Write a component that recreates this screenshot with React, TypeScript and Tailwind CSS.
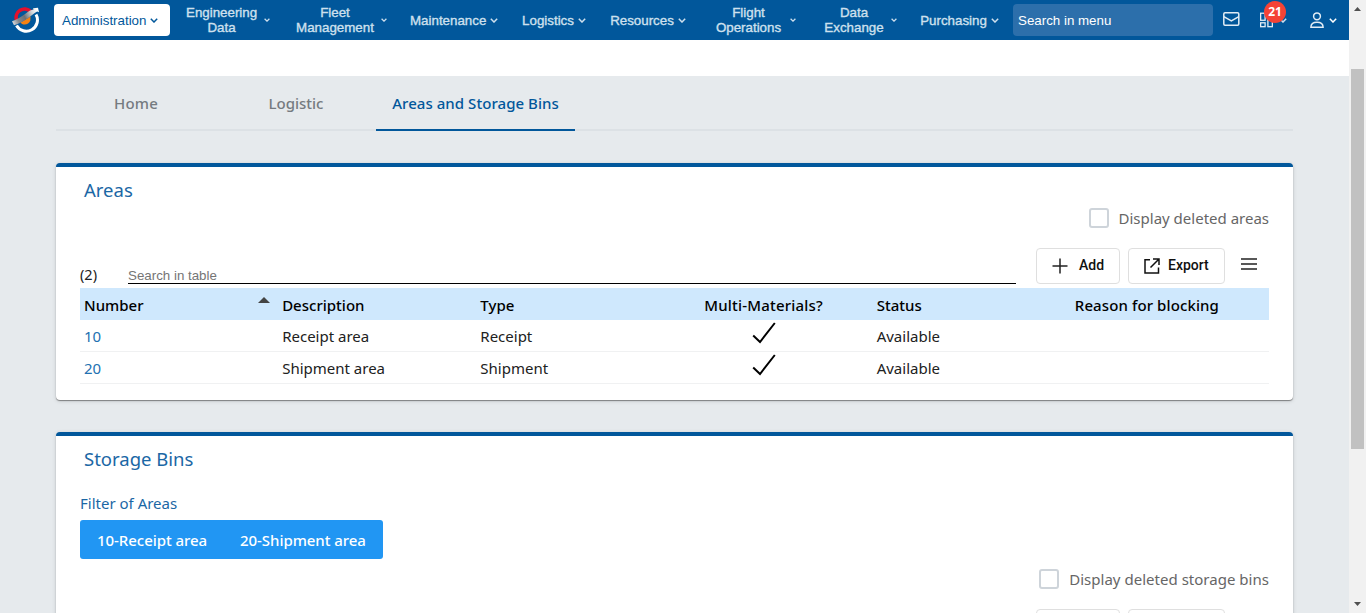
import React from 'react';

const navItems = [
  { label: ['Engineering', 'Data'], box: 'w-[109px]', text: 'w-[71px]', chev: 'small', gap: 'pl-[7px]' },
  { label: ['Fleet', 'Management'], box: 'w-[115px]', text: 'w-[80px]', chev: 'small', gap: 'pl-[6px]' },
  { label: ['Maintenance'], box: 'w-[112px]', text: 'w-[76px]', chev: 'big', gap: 'pl-[4px]' },
  { label: ['Logistics'], box: 'w-[88px]', text: 'w-[52px]', chev: 'big', gap: 'pl-[4px]' },
  { label: ['Resources'], box: 'w-[105px]', text: 'w-[64px]', chev: 'big', gap: 'pl-[4px]' },
  { label: ['Flight', 'Operations'], box: 'w-[109px]', text: 'w-[67px]', chev: 'small', gap: 'pl-[8px]' },
  { label: ['Data', 'Exchange'], box: 'w-[96px]', text: 'w-[60px]', chev: 'small', gap: 'pl-[7px]' },
  { label: ['Purchasing'], box: 'w-[93px]', text: 'w-[67px]', chev: 'big', gap: 'pl-[4px]' },
];

function Chevron({ small = false }: { small?: boolean }) {
  return (
    <svg
      className={small ? 'h-[4px] w-[6px] shrink-0' : 'h-[5px] w-[8px] shrink-0'}
      viewBox="0 0 8 5"
      fill="none"
      stroke="currentColor"
      strokeWidth={small ? 1.7 : 1.5}
    >
      <path d="M0.8 0.8 4 4 7.2 0.8" />
    </svg>
  );
}

function Logo() {
  return (
    <svg className="ml-[12px] h-[26px] w-[28px] shrink-0" viewBox="0 0 28 26" fill="none">
      <defs>
        <linearGradient id="wing" x1="0" y1="17" x2="26" y2="4" gradientUnits="userSpaceOnUse">
          <stop offset="0" stopColor="#e4e6e8" />
          <stop offset="0.25" stopColor="#85888c" />
          <stop offset="0.5" stopColor="#6c6f73" />
          <stop offset="0.8" stopColor="#d5d8db" />
          <stop offset="1" stopColor="#ffffff" />
        </linearGradient>
      </defs>
      <path d="M4.500 13A8.500 8.500 0 0 1 18.500 4.400" stroke="#e4102d" strokeWidth="3.600" />
      <path d="M24 7.500A11 11 0 0 1 4.500 18.500" stroke="#fff" strokeWidth="3" />
      <path d="M8.500 15.500C10 18.500 17 18.500 18.300 13.500L18.500 9.500Z" fill="#f58212" />
      <path d="M0 14.200C7 12 13 7 18 3.500L21.500 2.600 21 1.200 26 0.800 27 5.200 25.200 4.500C20 7.500 12 15.500 2 18.200Z" fill="url(#wing)" />
    </svg>
  );
}

function NavBar() {
  return (
    <header className="flex h-[40px] shrink-0 items-center bg-[#01579b] font-['Liberation_Sans',Arial,sans-serif] text-[13.33px] text-[#cfe0ee]">
      <Logo />
      <button className="ml-[14px] flex h-[32px] w-[116px] shrink-0 items-center gap-[4px] rounded-[4px] bg-white pl-[8px] text-[#01579b]">
        <span className="w-[84px] translate-y-px whitespace-nowrap text-left">Administration</span>
        <Chevron />
      </button>
      <nav className="ml-[16px] flex shrink-0 items-center">
        {navItems.map((item) => (
          <div key={item.label.join(' ')} className={`${item.box} flex shrink-0 items-center`}>
            <span className={`${item.text} shrink-0 text-center leading-[15px] [-webkit-text-stroke:0.35px_currentColor]`}>
              {item.label.map((line) => (
                <span key={line} className="block whitespace-nowrap">{line}</span>
              ))}
            </span>
            <span className={item.gap}>
              <Chevron small={item.chev === 'small'} />
            </span>
          </div>
        ))}
      </nav>
      <div className="flex h-[32px] w-[200px] shrink-0 items-center rounded-[4px] bg-[#2c6fab] pl-[5px] pt-[2px] text-white">
        Search in menu
      </div>
      <svg className="ml-[10px] h-[14px] w-[17px] shrink-0 -translate-y-px" viewBox="0 0 17 14" fill="none" stroke="#e1ecf5" strokeWidth="1.500">
        <rect x="0.800" y="0.800" width="15" height="12.400" rx="1.200" />
        <path d="M0.800 4.600 8.350 8.800 15.800 4.600" />
      </svg>
      <div className="relative ml-[20px] flex h-[40px] w-[27px] shrink-0 items-center">
        <svg className="h-[16px] w-[14px]" viewBox="0 0 14 16" fill="none" stroke="#e1ecf5" strokeWidth="1.400">
          <rect x="0.700" y="0.700" width="4.800" height="7.600" />
          <rect x="8.500" y="0.700" width="4.800" height="4.300" />
          <rect x="0.700" y="11" width="4.800" height="4.200" />
          <rect x="8.500" y="7.700" width="4.800" height="7.500" />
        </svg>
        <span className="ml-[6px]"><Chevron /></span>
        <span className="absolute left-[4px] top-[1px] flex h-[22px] w-[22px] items-center justify-center rounded-full bg-[#f44336] font-['Open_Sans','Noto_Sans',sans-serif] text-[12px] font-bold text-white">
          21
        </span>
      </div>
      <svg className="ml-[23px] h-[16px] w-[14px] shrink-0" viewBox="0 0 14 16" fill="none" stroke="#e1ecf5" strokeWidth="1.500">
        <circle cx="7" cy="4.300" r="3.400" />
        <path d="M0.900 15.200C0.900 11.500 2.800 10.200 7 10.200S13.100 11.500 13.100 15.200Z" />
      </svg>
      <span className="ml-[5px] text-white"><Chevron /></span>
    </header>
  );
}

function Tabs() {
  return (
    <div className="flex h-[55px] border-b-2 border-[#dce1e5] font-medium text-[#757b80]">
      <div className="flex h-[53px] w-[160px] items-center justify-center tracking-[0.2px]">Home</div>
      <div className="flex h-[53px] w-[160px] items-center justify-center">Logistic</div>
      <div className="flex h-[55px] w-[199px] items-center justify-center border-b-2 border-[#01579b] tracking-[0.05px] text-[#01579b]">
        <span className="whitespace-nowrap">Areas and Storage Bins</span>
      </div>
    </div>
  );
}

function DeletedToggle({ label }: { label: string }) {
  return (
    <label className="flex h-[20px] items-center justify-end gap-[10px] text-[#666]">
      <span className="h-[20px] w-[20px] rounded-[3px] border-2 border-[#ced4da] bg-white" />
      <span>{label}</span>
    </label>
  );
}

function Toolbar() {
  return (
    <div className="flex shrink-0 font-[Roboto,sans-serif] text-[14px] font-medium text-[#111]">
      <button className="flex h-[36px] w-[84px] items-center rounded-[4px] border border-[#dfdfdf] bg-white pl-[15px]">
        <svg className="h-[16px] w-[16px]" viewBox="0 0 16 16" stroke="#222" strokeWidth="1.500">
          <path d="M8 0.500V15.500M0.500 8H15.500" />
        </svg>
        <span className="ml-[11px] -translate-y-px">Add</span>
      </button>
      <button className="ml-[8px] flex h-[36px] w-[97px] items-center rounded-[4px] border border-[#dfdfdf] bg-white pl-[15px]">
        <svg className="h-[16px] w-[16px]" viewBox="0 0 16 16" fill="none" stroke="#111" strokeWidth="1.500">
          <path d="M6 1.700H1V15H14.500V9.500M9 1H15V7M15 1 6.500 9.500" />
        </svg>
        <span className="ml-[8px] -translate-y-px">Export</span>
      </button>
      <svg className="ml-[16px] mt-[10px] h-[12px] w-[16px]" viewBox="0 0 16 12" stroke="#222" strokeWidth="1.500">
        <path d="M0 1H16M0 6H16M0 11H16" />
      </svg>
      <span className="w-[12px]" />
    </div>
  );
}

function Check() {
  return (
    <svg className="h-[22px] w-[24px] -translate-y-[3px]" viewBox="0 0 24 22" fill="none" stroke="#000" strokeWidth="2">
      <path d="M1.200 13.500 8 20 22.800 1" />
    </svg>
  );
}

const rows = [
  { id: '10', description: 'Receipt area', type: 'Receipt' },
  { id: '20', description: 'Shipment area', type: 'Shipment' },
];

function AreasTable() {
  return (
    <div className="text-[#212121]">
      <div className="grid h-[32px] grid-cols-6 items-center bg-[#cfe8fd] pt-[2px] font-medium text-black">
        <div className="flex items-center justify-between pl-[4px] pr-[8px]">
          Number
          <svg className="h-[6px] w-[12px] -translate-y-[5px]" viewBox="0 0 12 6">
            <path d="M0 6 6 0 12 6Z" fill="#444" />
          </svg>
        </div>
        <div className="pl-[4px]">Description</div>
        <div className="pl-[4px]">Type</div>
        <div className="pr-[20px] text-center tracking-[0.2px]">Multi-Materials?</div>
        <div className="pl-[4px]">Status</div>
        <div className="pl-[4px] tracking-[0.1px]">Reason for blocking</div>
      </div>
      {rows.map((row) => (
        <div key={row.id} className="grid h-[32px] grid-cols-6 items-center border-b border-[#f0f1f2]">
          <div className="pl-[4px] text-[#2271b1]">{row.id}</div>
          <div className="pl-[4px]">{row.description}</div>
          <div className="pl-[4px]">{row.type}</div>
          <div className="flex justify-center pr-[20px]"><Check /></div>
          <div className="pl-[4px]">Available</div>
          <div />
        </div>
      ))}
    </div>
  );
}

function ScrollBar() {
  return (
    <div className="flex w-[17px] shrink-0 flex-col items-center bg-[#f1f1f1]">
      <svg className="mt-[7px] h-[4px] w-[7px]" viewBox="0 0 7 4"><path d="M0 4 3.500 0 7 4Z" fill="#505050" /></svg>
      <div className="mr-px mt-[58px] h-[380px] w-[13px] bg-[#c1c1c1]" />
      <svg className="mb-[7px] mt-auto h-[4px] w-[7px]" viewBox="0 0 7 4"><path d="M0 0 3.500 4 7 0Z" fill="#505050" /></svg>
    </div>
  );
}

const cardClass =
  'rounded-[4px] border-t-4 border-[#01579b] bg-white px-[24px] shadow-[0_1px_1px_rgba(0,0,0,0.4),0_1px_4px_rgba(0,0,0,0.15)]';

export default function App() {
  return (
    <div className="flex h-[613px] w-[1366px] overflow-hidden font-['Noto_Sans','Open_Sans',sans-serif] text-[15px] leading-[20px]">
      <div className="flex h-[613px] w-[1349px] shrink-0 flex-col bg-white">
        <NavBar />
        <main className="mt-[36px] h-[537px] overflow-hidden bg-[#e6eaed] px-[56px]">
          <Tabs />
          <section className={`${cardClass} mt-[32px] h-[237px]`}>
            <h2 className="ml-[4px] mt-[11px] h-[24px] text-[18.5px] leading-[24px] text-[#1b67a5]">Areas</h2>
            <div className="mt-[6px]"><DeletedToggle label="Display deleted areas" /></div>
            <div className="mt-[20px] flex h-[40px] justify-between">
              <div className="flex w-[936px] items-end pb-[4px]">
                <span className="w-[48px] text-[14.5px] text-[#222]">(2)</span>
                <div className="flex h-[19px] grow items-center border-b border-black pt-[3px] font-['Liberation_Sans',Arial,sans-serif] text-[13.33px] text-[#757575]">
                  Search in table
                </div>
              </div>
              <Toolbar />
            </div>
            <AreasTable />
          </section>
          <section className={`${cardClass} mt-[32px] h-[260px]`}>
            <h2 className="ml-[4px] mt-[11px] h-[24px] text-[18.5px] leading-[24px] text-[#1b67a5]">Storage Bins</h2>
            <div className="mt-[22px] text-[#1b67a5]">Filter of Areas</div>
            <div className="mt-[7px] flex h-[39px] w-[303px] items-center rounded-[3px] bg-[#2196f3] font-medium text-white">
              <span className="w-[143px] whitespace-nowrap pl-[17px] -tracking-[0.05px]">10-Receipt area</span>
              <span className="whitespace-nowrap pl-[17px] -tracking-[0.05px]">20-Shipment area</span>
            </div>
            <div className="mt-[10px] tracking-[0.02px]"><DeletedToggle label="Display deleted storage bins" /></div>
            <div className="mt-[20px] flex justify-end"><Toolbar /></div>
          </section>
        </main>
      </div>
      <ScrollBar />
    </div>
  );
}
